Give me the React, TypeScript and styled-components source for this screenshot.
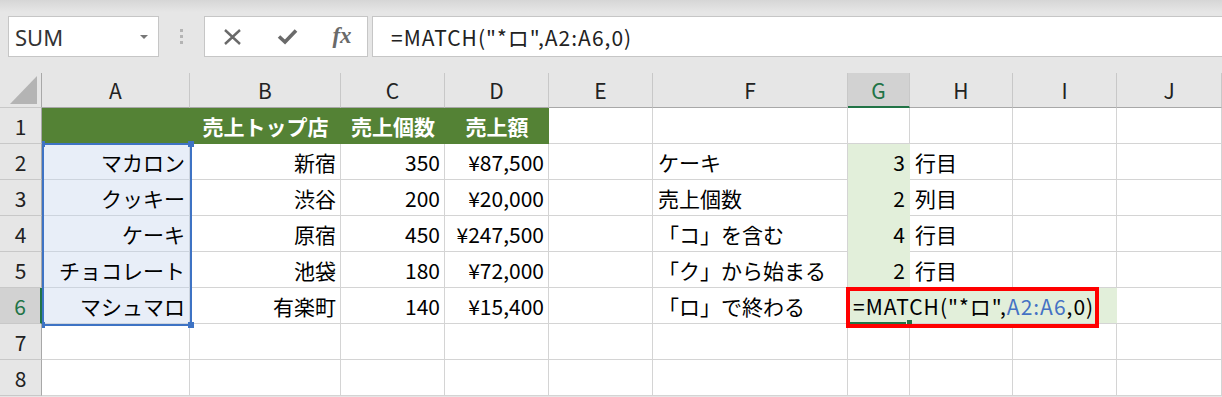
import React from 'react';
import styled, { createGlobalStyle } from 'styled-components';

const GlobalStyle = createGlobalStyle`
  html, body { margin: 0; padding: 0; }
  body {
    background: #e6e6e6;
    font-family: "Noto Sans CJK JP", "Noto Sans", sans-serif;
    overflow: hidden;
  }
`;

const COLS = [42, 148, 151, 104, 104, 104, 195, 62, 103, 104, 105];
const LETTERS = ['A', 'B', 'C', 'D', 'E', 'F', 'G', 'H', 'I', 'J'];
const GREEN = '#217346';

const Page = styled.div`
  width: 1222px;
  height: 397px;
  overflow: hidden;
  background: #e6e6e6;
`;

const TopBar = styled.div`
  display: flex;
  height: 73px;
  box-sizing: border-box;
  padding: 16px 0 16px 8px;
  background: linear-gradient(#d6d6d6, #e6e6e6 12px);
`;

const NameBox = styled.div`
  width: 151px;
  box-sizing: border-box;
  border: 1px solid #c6c6c6;
  background: #fff;
  display: flex;
  align-items: center;
  justify-content: space-between;
  padding: 0 10px 0 6px;
  font-family: "Noto Sans", sans-serif;
  font-size: 22px;
  color: #333;
`;

const DropArrow = styled.span`
  width: 0;
  height: 0;
  border-left: 4px solid transparent;
  border-right: 4px solid transparent;
  border-top: 4px solid #777;
`;

const DotsArea = styled.div`
  width: 45px;
  display: flex;
  flex-direction: column;
  align-items: center;
  justify-content: center;
  gap: 3px;
`;

const Dot = styled.span`
  width: 3px;
  height: 3px;
  background: #b4b4b4;
`;

const FxBox = styled.div`
  width: 164px;
  box-sizing: border-box;
  border: 1px solid #c6c6c6;
  background: #fff;
  display: grid;
  grid-template-columns: 55px 55px 54px;
  align-items: center;
  justify-items: center;
`;

const FxText = styled.span`
  font-family: "Liberation Serif", serif;
  font-style: italic;
  font-weight: 700;
  font-size: 23px;
  color: #6a6a6a;
  letter-spacing: 0px;
  margin-top: -2px;
`;

const FormulaInput = styled.div`
  flex: 1;
  margin-left: 4px;
  box-sizing: border-box;
  border: 1px solid #c6c6c6;
  border-right: none;
  background: #fff;
  display: flex;
  align-items: center;
  padding-left: 18px;
  font-size: 21px;
  letter-spacing: 1px;
  color: #222;
  white-space: nowrap;
`;

const SheetWrap = styled.div`
  position: relative;
`;

const Grid = styled.div`
  display: grid;
  grid-template-columns: ${COLS.map((c) => `${c}px`).join(' ')};
  grid-template-rows: 35px repeat(8, 36px);
  background: #fff;
`;

const Corner = styled.div`
  box-sizing: border-box;
  background: #e6e6e6;
  border-right: 1px solid #a8a8a8;
  border-bottom: 1px solid #c8c8c8;
  display: flex;
  align-items: flex-end;
  justify-content: flex-end;
  padding: 0 3px 3px 0;
`;

const ColHead = styled.div<{ $active?: boolean }>`
  box-sizing: border-box;
  background: ${(p) => (p.$active ? '#d2d2d2' : '#e6e6e6')};
  color: ${(p) => (p.$active ? GREEN : '#222')};
  border-right: 1px solid #c8c8c8;
  border-bottom: ${(p) => (p.$active ? `2px solid ${GREEN}` : '1px solid #a8a8a8')};
  display: flex;
  align-items: center;
  justify-content: center;
  font-size: 21px;
`;

const RowHead = styled.div<{ $active?: boolean }>`
  box-sizing: border-box;
  background: ${(p) => (p.$active ? '#d2d2d2' : '#e6e6e6')};
  color: ${(p) => (p.$active ? GREEN : '#222')};
  border-right: ${(p) => (p.$active ? `2px solid ${GREEN}` : '1px solid #a8a8a8')};
  border-bottom: 1px solid #c8c8c8;
  display: flex;
  align-items: center;
  justify-content: center;
  font-size: 21px;
`;

type Align = 'left' | 'right' | 'center';

const Cell = styled.div<{ $align?: Align; $fill?: string; $tint?: boolean; $head?: boolean }>`
  box-sizing: border-box;
  background: ${(p) => p.$fill ?? (p.$tint ? '#e8eef8' : '#fff')};
  border-right: 1px solid ${(p) => p.$fill ?? (p.$tint ? '#cdd4de' : '#d4d4d4')};
  border-bottom: 1px solid ${(p) => p.$fill ?? (p.$tint ? '#cdd4de' : '#d4d4d4')};
  display: flex;
  align-items: center;
  justify-content: ${(p) =>
    p.$align === 'right' ? 'flex-end' : p.$align === 'center' ? 'center' : 'flex-start'};
  padding: 0 4px 0 5px;
  font-size: 21px;
  font-weight: ${(p) => (p.$head ? 700 : 400)};
  color: ${(p) => (p.$head ? '#fff' : '#000')};
  white-space: nowrap;
`;

const SheetLayer = styled.div`
  position: absolute;
  left: 42px;
  top: 35px;
  right: 0;
  bottom: 0;
  overflow: hidden;
  pointer-events: none;
`;

const Selection = styled.div`
  position: absolute;
  left: 0;
  top: 35px;
  width: 150px;
  height: 183px;
  box-sizing: border-box;
  border: 2px solid #3e73c4;
`;

const Handle = styled.div<{ $color?: string }>`
  position: absolute;
  width: 6px;
  height: 6px;
  background: ${(p) => p.$color ?? '#3e73c4'};
`;

const Editor = styled.div`
  position: absolute;
  left: 806px;
  top: 180px;
  width: 269px;
  height: 35px;
  background: #e2efda;
  display: flex;
  align-items: center;
  padding-left: 5px;
  box-sizing: border-box;
  font-size: 21px;
  letter-spacing: 1px;
  color: #000;
  white-space: nowrap;
`;

const RefText = styled.span`
  color: #4472c4;
`;

const ActiveLine = styled.div`
  position: absolute;
  left: 806px;
  top: 214px;
  width: 58px;
  height: 2px;
  background: ${GREEN};
`;

const RedBox = styled.div`
  position: absolute;
  left: 804px;
  top: 179px;
  width: 253px;
  height: 41px;
  box-sizing: border-box;
  border: 4px solid #ff0000;
`;

type CellDef = { t?: string; a?: Align; fill?: string; tint?: boolean; head?: boolean };

const HEAD_FILL = '#548235';
const G_FILL = '#e2efda';

const empty = (): CellDef => ({});

const rows: CellDef[][] = [
  [
    { fill: HEAD_FILL },
    { t: '売上トップ店', a: 'center', fill: HEAD_FILL, head: true },
    { t: '売上個数', a: 'center', fill: HEAD_FILL, head: true },
    { t: '売上額', a: 'center', fill: HEAD_FILL, head: true },
    empty(), empty(), empty(), empty(), empty(), empty(),
  ],
  [
    { t: 'マカロン', a: 'right', tint: true },
    { t: '新宿', a: 'right' },
    { t: '350', a: 'right' },
    { t: '¥87,500', a: 'right' },
    empty(),
    { t: 'ケーキ' },
    { t: '3', a: 'right', fill: G_FILL },
    { t: '行目' },
    empty(), empty(),
  ],
  [
    { t: 'クッキー', a: 'right', tint: true },
    { t: '渋谷', a: 'right' },
    { t: '200', a: 'right' },
    { t: '¥20,000', a: 'right' },
    empty(),
    { t: '売上個数' },
    { t: '2', a: 'right', fill: G_FILL },
    { t: '列目' },
    empty(), empty(),
  ],
  [
    { t: 'ケーキ', a: 'right', tint: true },
    { t: '原宿', a: 'right' },
    { t: '450', a: 'right' },
    { t: '¥247,500', a: 'right' },
    empty(),
    { t: '「コ」を含む' },
    { t: '4', a: 'right', fill: G_FILL },
    { t: '行目' },
    empty(), empty(),
  ],
  [
    { t: 'チョコレート', a: 'right', tint: true },
    { t: '池袋', a: 'right' },
    { t: '180', a: 'right' },
    { t: '¥72,000', a: 'right' },
    empty(),
    { t: '「ク」から始まる' },
    { t: '2', a: 'right', fill: G_FILL },
    { t: '行目' },
    empty(), empty(),
  ],
  [
    { t: 'マシュマロ', a: 'right', tint: true },
    { t: '有楽町', a: 'right' },
    { t: '140', a: 'right' },
    { t: '¥15,400', a: 'right' },
    empty(),
    { t: '「ロ」で終わる' },
    { fill: G_FILL },
    empty(), empty(), empty(),
  ],
  Array.from({ length: 10 }, empty),
  Array.from({ length: 10 }, empty),
];

const CancelIcon = () => (
  <svg width="19" height="16" viewBox="0 0 19 16">
    <path d="M2 1 L17 15 M17 1 L2 15" stroke="#6a6a6a" strokeWidth="2.4" fill="none" />
  </svg>
);

const CheckIcon = () => (
  <svg width="21" height="17" viewBox="0 0 21 17">
    <path d="M2 8.5 L8 14 L19 2.5" stroke="#6a6a6a" strokeWidth="3.6" fill="none" />
  </svg>
);

const CornerTriangle = () => (
  <svg width="28" height="28" viewBox="0 0 28 28">
    <polygon points="27,0 27,28 0,28" fill="#b4b4b4" />
  </svg>
);

export default function App() {
  return (
    <Page>
      <GlobalStyle />
      <TopBar>
        <NameBox>
          <span>SUM</span>
          <DropArrow />
        </NameBox>
        <DotsArea>
          <Dot />
          <Dot />
          <Dot />
        </DotsArea>
        <FxBox>
          <CancelIcon />
          <CheckIcon />
          <FxText>fx</FxText>
        </FxBox>
        <FormulaInput>=MATCH("*ロ",A2:A6,0)</FormulaInput>
      </TopBar>
      <SheetWrap>
        <Grid>
          <Corner>
            <CornerTriangle />
          </Corner>
          {LETTERS.map((l) => (
            <ColHead key={l} $active={l === 'G'}>
              {l}
            </ColHead>
          ))}
          {rows.map((row, ri) => (
            <React.Fragment key={ri}>
              <RowHead $active={ri === 5}>{ri + 1}</RowHead>
              {row.map((c, ci) => (
                <Cell key={ci} $align={c.a} $fill={c.fill} $tint={c.tint} $head={c.head}>
                  {c.t}
                </Cell>
              ))}
            </React.Fragment>
          ))}
        </Grid>
        <SheetLayer>
          <Selection />
          <Handle style={{ left: -3, top: 33 }} />
          <Handle style={{ left: 146, top: 33 }} />
          <Handle style={{ left: -3, top: 214 }} />
          <Handle style={{ left: 146, top: 214 }} />
          <Editor>
            =MATCH("*ロ",<RefText>A2:A6</RefText>,0)
          </Editor>
          <ActiveLine />
          <Handle $color={GREEN} style={{ left: 865, top: 212, width: 5, height: 5 }} />
          <RedBox />
        </SheetLayer>
      </SheetWrap>
    </Page>
  );
}
